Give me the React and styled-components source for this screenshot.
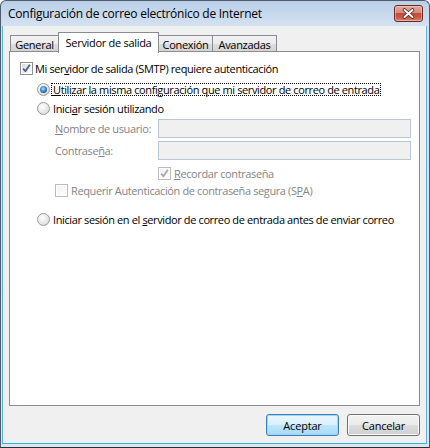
import React from 'react';
import styled, { createGlobalStyle, css } from 'styled-components';

const GlobalStyle = createGlobalStyle`
  html, body {
    margin: 0;
    padding: 0;
    background: #ffffff;
  }
  body {
    font-family: 'Open Sans', 'Noto Sans', 'Liberation Sans', sans-serif;
    font-size: 11px;
    letter-spacing: -0.38px;
    color: #000;
  }
`;

const Window = styled.div`
  box-sizing: border-box;
  width: 430px;
  height: 448px;
  border: 1px solid #4d5b6b;
  border-bottom-color: #2c2f33;
  border-radius: 6px 6px 0 0;
  background: linear-gradient(to bottom, #bacfe8 0, #d3e1f1 24px, #dbe6f3 100%);
  padding: 0 2px 3px 1px;
  display: flex;
  flex-direction: column;
`;

const TitleBar = styled.div`
  height: 25px;
  display: flex;
  align-items: center;
  justify-content: space-between;
  padding: 0 4px 0 6px;
`;

const Title = styled.div`
  font-size: 12px;
  letter-spacing: -0.25px;
  color: #000;
`;

const CloseButton = styled.div`
  box-sizing: border-box;
  width: 29px;
  height: 17px;
  border: 1px solid #6b2a28;
  border-radius: 3px;
  background: linear-gradient(to bottom, #e3aa9f 0, #d58a7c 45%, #c34b39 50%, #c85640 75%, #d98a70 100%);
  box-shadow: inset 0 0 0 1px rgba(255, 220, 210, 0.45);
  display: flex;
  align-items: center;
  justify-content: center;
`;

const Client = styled.div`
  flex: 1;
  display: flex;
  flex-direction: column;
  background: #f0f0f0;
  border-left: 1px solid #5cb3e2;
  border-right: 1px solid #5cb3e2;
  border-bottom: 1px solid #38b2e4;
  padding: 6px 6px 7px 6px;
`;

const TabStrip = styled.div`
  display: flex;
  align-items: flex-end;
  height: 20px;
  padding-left: 1px;
  margin-bottom: -1px;
`;

const Tab = styled.div`
  box-sizing: border-box;
  width: ${(p) => p.$w}px;
  margin-left: ${(p) => (p.$first ? 0 : -1)}px;
  height: 17px;
  border: 1px solid #898c95;
  border-bottom: none;
  display: flex;
  align-items: center;
  justify-content: center;
  white-space: nowrap;
  letter-spacing: -0.3px;
  ${(p) =>
    p.$active
      ? css`
          position: relative;
          z-index: 1;
          height: 21px;
          margin-bottom: -1px;
          background: #ffffff;
          padding-bottom: 1px;
        `
      : css`
          background: linear-gradient(to bottom, #f3f3f3 0, #ebebeb 50%, #dddddd 50%, #d3d3d3 100%);
          padding-top: 1px;
        `}
`;

const Panel = styled.div`
  box-sizing: border-box;
  height: 355px;
  background: #ffffff;
  border: 1px solid #898c95;
  padding: 10px 0 0 10px;
  display: flex;
  flex-direction: column;
`;

const Row = styled.div`
  display: flex;
  align-items: center;
  height: ${(p) => p.$h || 13}px;
  margin-top: ${(p) => p.$mt || 0}px;
  padding-left: ${(p) => p.$indent || 0}px;
  white-space: nowrap;
`;

const Key = styled.span`
  text-decoration: underline;
  text-underline-offset: 1px;
`;

const Text = styled.span`
  margin-left: ${(p) => (p.$gap !== undefined ? p.$gap : 3)}px;
  color: ${(p) => (p.$disabled ? '#858585' : '#000')};
`;

const Focus = styled.span`
  margin-left: 2px;
  padding: 0 1px;
  line-height: 11px;
  outline: 1px dotted #000;
  outline-offset: 0;
`;

const BoxMark = styled.span`
  box-sizing: border-box;
  position: relative;
  flex: none;
  width: 13px;
  height: 13px;
  border: 1px solid ${(p) => (p.$disabled ? '#bcbcbc' : '#8e8f8f')};
  background: #fff;
  &::before {
    content: '';
    position: absolute;
    left: 1px;
    top: 1px;
    right: 1px;
    bottom: 1px;
    background: ${(p) =>
      p.$disabled
        ? 'linear-gradient(135deg, #f4f4f4, #fcfcfc)'
        : 'linear-gradient(135deg, #dcdcdc, #fbfbfb)'};
  }
  svg {
    position: absolute;
    left: 0;
    top: 0;
  }
`;

const RadioMark = styled.span`
  box-sizing: border-box;
  position: relative;
  flex: none;
  width: 13px;
  height: 13px;
  border-radius: 50%;
  border: 1px solid #9a9a9a;
  background: radial-gradient(circle at 40% 35%, #ffffff 0, #f0f0f0 35%, #cfcfcf 100%);
  ${(p) =>
    p.$checked &&
    css`
      &::after {
        content: '';
        position: absolute;
        left: 2px;
        top: 2px;
        width: 7px;
        height: 7px;
        border-radius: 50%;
        background: radial-gradient(circle at 45% 40%, #b9e2fb 0, #4a9ce0 35%, #1b5596 75%, #174a84 100%);
      }
    `}
`;

const FieldLabel = styled.span`
  width: 103px;
  flex: none;
  color: #858585;
`;

const TextBox = styled.div`
  box-sizing: border-box;
  width: 253px;
  height: 19px;
  border: 1px solid #b9c7d5;
  background: #f0f0f0;
`;

const ButtonRow = styled.div`
  display: flex;
  justify-content: flex-end;
  gap: 8px;
  margin-top: 8px;
`;

const Button = styled.div`
  box-sizing: border-box;
  width: 73px;
  height: 22px;
  border-radius: 3px;
  display: flex;
  align-items: center;
  justify-content: center;
  letter-spacing: -0.2px;
  ${(p) =>
    p.$default
      ? css`
          border: 1px solid #3c7fb1;
          background: linear-gradient(to bottom, #eaf6fd 0, #d9f0fc 50%, #bee6fd 50%, #a7d9f5 100%);
          box-shadow: inset 0 0 0 1px #9fd8f6;
        `
      : css`
          border: 1px solid #707070;
          background: linear-gradient(to bottom, #f2f2f2 0, #ebebeb 50%, #dddddd 50%, #cfcfcf 100%);
          box-shadow: inset 0 0 0 1px #fcfcfc;
        `}
`;

const Check = ({ checked, disabled }) => (
  <BoxMark $disabled={disabled}>
    {checked && (
      <svg width="11" height="11" viewBox="0 0 11 11">
        <path
          d="M2.2 5.6 L4.4 8.2 L8.8 1.8"
          fill="none"
          stroke={disabled ? '#a8a8a8' : '#4a5f8f'}
          strokeWidth="1.8"
          strokeLinejoin="round"
        />
      </svg>
    )}
  </BoxMark>
);

const CloseGlyph = () => (
  <svg width="13" height="11" viewBox="0 0 13 11">
    <path d="M2.5 2 L10.5 9 M10.5 2 L2.5 9" stroke="#5a2420" strokeWidth="3.6" strokeLinecap="round" />
    <path d="M2.5 2 L10.5 9 M10.5 2 L2.5 9" stroke="#ffffff" strokeWidth="2" strokeLinecap="round" />
  </svg>
);

const tabs = [
  { label: 'General', w: 49 },
  { label: 'Servidor de salida', w: 101, active: true },
  { label: 'Conexión', w: 55 },
  { label: 'Avanzadas', w: 65 },
];

export default function App() {
  return (
    <>
      <GlobalStyle />
      <Window>
        <TitleBar>
          <Title>Configuración de correo electrónico de Internet</Title>
          <CloseButton>
            <CloseGlyph />
          </CloseButton>
        </TitleBar>
        <Client>
          <TabStrip>
            {tabs.map((t, i) => (
              <Tab key={t.label} $w={t.w} $active={t.active} $first={i === 0}>
                {t.label}
              </Tab>
            ))}
          </TabStrip>
          <Panel>
            <Row $indent={0}>
              <Check checked />
              <Text $gap={2}>
                Mi ser<Key>v</Key>idor de salida (SMTP) requiere autenticación
              </Text>
            </Row>
            <Row $indent={17} $mt={8}>
              <RadioMark $checked />
              <Focus>
                <Key>U</Key>tilizar la misma configuración que mi servidor de correo de entrada
              </Focus>
            </Row>
            <Row $indent={17} $mt={6}>
              <RadioMark />
              <Text>
                Inici<Key>a</Key>r sesión utilizando
              </Text>
            </Row>
            <Row $indent={35} $mt={4} $h={19}>
              <FieldLabel>
                <Key>N</Key>ombre de usuario:
              </FieldLabel>
              <TextBox />
            </Row>
            <Row $indent={35} $mt={3} $h={19}>
              <FieldLabel>
                Contrase<Key>ñ</Key>a:
              </FieldLabel>
              <TextBox />
            </Row>
            <Row $indent={138} $mt={7}>
              <Check checked disabled />
              <Text $disabled>
                <Key>R</Key>ecordar contraseña
              </Text>
            </Row>
            <Row $indent={35} $mt={4}>
              <Check disabled />
              <Text $disabled>
                Requerir Autenticación de contraseña segura (S<Key>P</Key>A)
              </Text>
            </Row>
            <Row $indent={17} $mt={16}>
              <RadioMark />
              <Text>
                Iniciar sesión en el <Key>s</Key>ervidor de correo de entrada antes de enviar correo
              </Text>
            </Row>
          </Panel>
          <ButtonRow>
            <Button $default>Aceptar</Button>
            <Button>Cancelar</Button>
          </ButtonRow>
        </Client>
      </Window>
    </>
  );
}
